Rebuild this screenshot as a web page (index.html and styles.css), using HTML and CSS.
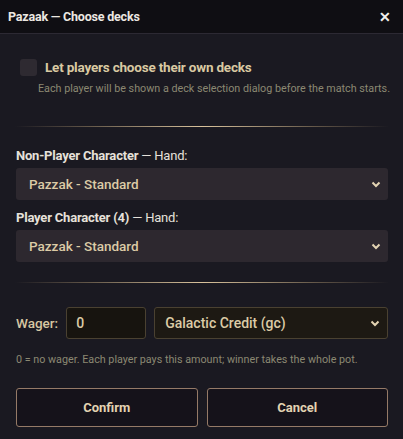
FILE: index.html
```html
<!DOCTYPE html>
<html>
<head>
<meta charset="utf-8">
<link rel="stylesheet" href="styles.css">
</head>
<body>
<div class="dialog">
  <header class="titlebar">
    <span class="title">Pazaak — Choose decks</span>
    <span class="close">✕</span>
  </header>
  <div class="content">
    <div class="check-row">
      <span class="checkbox"></span>
      <span class="check-label">Let players choose their own decks</span>
    </div>
    <p class="hint indent">Each player will be shown a deck selection dialog before the match starts.</p>
    <div class="divider first"></div>
    <div class="field">
      <div class="field-label"><b>Non-Player Character</b> — Hand:</div>
      <div class="select">
        <span>Pazzak - Standard</span>
        <svg class="chev" width="10" height="7" viewBox="0 0 10 7"><path d="M1.5 1.5 L5 5 L8.5 1.5" fill="none" stroke="#e3d3b2" stroke-width="2"/></svg>
      </div>
    </div>
    <div class="field">
      <div class="field-label"><b>Player Character (4)</b> — Hand:</div>
      <div class="select">
        <span>Pazzak - Standard</span>
        <svg class="chev" width="10" height="7" viewBox="0 0 10 7"><path d="M1.5 1.5 L5 5 L8.5 1.5" fill="none" stroke="#e3d3b2" stroke-width="2"/></svg>
      </div>
    </div>
    <div class="divider second"></div>
    <div class="wager-row">
      <span class="wager-label">Wager:</span>
      <div class="input">0</div>
      <div class="select dark">
        <span>Galactic Credit (gc)</span>
        <svg class="chev" width="10" height="7" viewBox="0 0 10 7"><path d="M1.5 1.5 L5 5 L8.5 1.5" fill="none" stroke="#e3d3b2" stroke-width="2"/></svg>
      </div>
    </div>
    <p class="hint wager-hint">0 = no wager. Each player pays this amount; winner takes the whole pot.</p>
    <div class="buttons">
      <button class="btn">Confirm</button>
      <button class="btn">Cancel</button>
    </div>
  </div>
</div>
</body>
</html>
```
FILE: styles.css
```css
* { box-sizing: border-box; }
html, body {
  margin: 0;
  padding: 0;
  background: #1a1921;
  width: 403px;
  height: 439px;
  overflow: hidden;
}
body {
  font-family: "Roboto", "Liberation Sans", sans-serif;
  color: #e3ddd3;
}
.dialog {
  width: 403px;
  height: 439px;
  background: #1a1921;
  display: flex;
  flex-direction: column;
}
.titlebar {
  height: 34px;
  background: #0f0e13;
  border-bottom: 1px solid #2c2933;
  display: flex;
  align-items: center;
  justify-content: space-between;
  padding: 0 12px 0 8px;
}
.title {
  font-size: 12.5px;
  font-weight: 700;
  color: #ece8e2;
  letter-spacing: -0.2px;
}
.close {
  font-size: 14px;
  font-weight: 700;
  color: #f2f0ec;
}
.content {
  padding: 0 15px 0 16px;
  display: flex;
  flex-direction: column;
}
.check-row {
  display: flex;
  align-items: center;
  margin-top: 25px;
  padding-left: 4px;
  height: 17px;
}
.checkbox {
  width: 17px;
  height: 17px;
  border-radius: 3px;
  background: #2e2a31;
  margin-right: 8px;
}
.check-label {
  font-size: 13.5px;
  font-weight: 700;
  color: #d9c9a2;
  letter-spacing: -0.2px;
  position: relative;
  top: -1px;
}
.hint {
  margin: 0;
  font-size: 10.75px;
  color: #8b8872;
  line-height: 14px;
  white-space: nowrap;
}
.hint.indent {
  margin-top: 6px;
  padding-left: 22px;
}
.divider {
  height: 1px;
  background: linear-gradient(90deg, rgba(200,175,130,0) 0%, rgba(150,130,100,0.6) 20%, #d9c29c 50%, rgba(150,130,100,0.6) 80%, rgba(200,175,130,0) 100%);
  margin-left: -1px;
  margin-right: -1px;
}
.divider.first { margin-top: 30px; margin-bottom: 21px; }
.divider.second { margin-top: 20px; margin-bottom: 24px; }
.field { display: flex; flex-direction: column; }
.field + .field { margin-top: 10px; }
.field-label {
  font-size: 13px;
  color: #e6e1da;
  line-height: 16px;
  margin-bottom: 4px;
  letter-spacing: -0.2px;
}
.field-label b { font-weight: 700; }
.select {
  height: 32px;
  background: #2d282f;
  border-radius: 3px;
  display: flex;
  align-items: center;
  justify-content: space-between;
  padding: 0 7px 0 13px;
  font-size: 13.5px;
  font-weight: 500;
  color: #dccba6;
}
.select.dark {
  flex: 1;
  background: #1d1913;
  border: 1px solid #4a4131;
  padding-left: 10px;
  font-size: 14px;
  font-weight: 500;
}
.chev { margin-top: 1px; }
.wager-row {
  display: flex;
  align-items: center;
  height: 32px;
  gap: 8px;
}
.wager-label {
  font-size: 13.5px;
  font-weight: 500;
  color: #d7c7a2;
  margin-right: 0;
}
.input {
  width: 80px;
  height: 32px;
  background: #17140f;
  border: 1px solid #4a4131;
  border-radius: 3px;
  padding: 0 9px;
  display: flex;
  align-items: center;
  font-size: 14px;
  font-weight: 500;
  color: #dccba6;
}
.wager-hint { margin-top: 14px; }
.buttons {
  display: flex;
  gap: 9px;
  margin-top: 21px;
}
.btn {
  flex: 1;
  height: 39px;
  background: #15121a;
  border: 1px solid #957a67;
  border-radius: 3px;
  font-family: inherit;
  font-size: 13px;
  font-weight: 700;
  color: #e3d3b2;
}
```
